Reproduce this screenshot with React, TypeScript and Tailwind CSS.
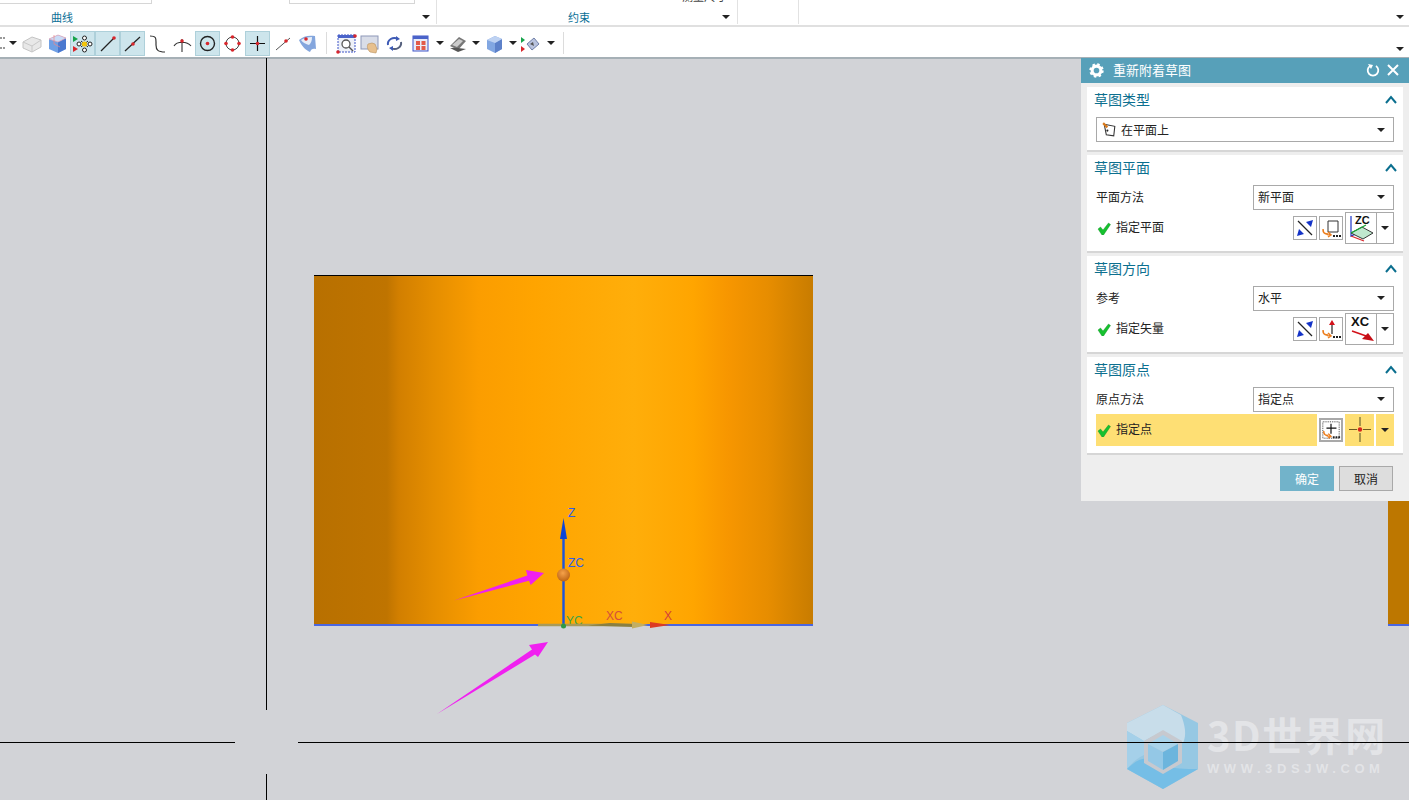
import React from "react";

const font = { fontFamily: '"Noto Sans CJK SC", "Liberation Sans", sans-serif' };

const Caret = ({ className = "" }: { className?: string }) => (
  <span className={`inline-block w-0 h-0 border-x-[4px] border-x-transparent border-t-[4px] border-t-[#222] ${className}`} />
);

// toolbar icons
const Dot = ({ cx, cy, r = 1.8 }: { cx: number; cy: number; r?: number }) => <circle cx={cx} cy={cy} r={r} fill="#d8262c" />;

const icons: Record<string, React.ReactNode> = {
  ghostBox: (
    <>
      <path d="M2 10l9-5 9 3v7l-9 5-9-4z" fill="#e8e8e8" stroke="#c4c4c4" />
      <path d="M2 10l9 4 9-6M11 14v6" fill="none" stroke="#c8c8c8" />
    </>
  ),
  cube: (
    <>
      <path d="M3 7l9-4 8 3v11l-8 4-9-4z" fill="#6f9fe4" />
      <path d="M12 10l8-4v11l-8 4z" fill="#4a78cf" />
      <path d="M3 7l9 3 8-4-8-3z" fill="#c9dcf7" stroke="#e6a3b3" strokeWidth="0.7" />
      <path d="M8 3v9l6 3" fill="none" stroke="#e88" strokeWidth="0.7" />
    </>
  ),
  snap: (
    <>
      <path d="M2 4l5 3-5 3z" fill="#16a34a" />
      <path d="M2 14l5 3-5 3z" fill="#d8262c" />
      <path d="M10 9l7 6M17 9l-7 6" stroke="#222" />
      <circle cx="13.500" cy="6" r="2" fill="#fff" stroke="#222" />
      <circle cx="13.500" cy="18" r="2" fill="#fff" stroke="#222" />
      <circle cx="8" cy="12" r="2" fill="#fff" stroke="#222" />
      <circle cx="19" cy="12" r="2" fill="#fff" stroke="#222" />
      <circle cx="13.500" cy="12" r="2.600" fill="#f4c60b" />
    </>
  ),
  lineEnd: (
    <>
      <path d="M5 19L18 6" stroke="#222" strokeWidth="1.2" />
      <Dot cx={18} cy={6} />
    </>
  ),
  lineMid: (
    <>
      <path d="M4 19L19 5" stroke="#222" strokeWidth="1.2" />
      <Dot cx={12} cy={12} />
    </>
  ),
  sCurve: <path d="M4 4c6 0 6 2 6 6v3c0 5 2 7 9 7" fill="none" stroke="#333" strokeWidth="1.2" />,
  arcCross: (
    <>
      <path d="M3 14c3-5 13-5 17 0M11 7v13" fill="none" stroke="#333" strokeWidth="1.1" />
      <Dot cx={11} cy={9} />
    </>
  ),
  circleCenter: (
    <>
      <circle cx="11.5" cy="11.5" r="7" fill="none" stroke="#222" strokeWidth="1.4" />
      <Dot cx={11.5} cy={11.5} />
    </>
  ),
  circleQuad: (
    <>
      <circle cx="11.5" cy="11.5" r="6.5" fill="none" stroke="#444" />
      <Dot cx={11.5} cy={5} />
      <Dot cx={11.5} cy={18} />
      <Dot cx={5} cy={11.5} />
      <Dot cx={18} cy={11.5} />
    </>
  ),
  cross: (
    <>
      <path d="M11.5 4v15M4 11.5h15" stroke="#111" strokeWidth="1.2" />
      <Dot cx={11.5} cy={11.5} />
    </>
  ),
  lineNear: (
    <>
      <path d="M5 18L19 6" stroke="#555" />
      <Dot cx={15} cy={9} />
    </>
  ),
  surface: (
    <>
      <path d="M3 8c4-4 10-5 16-4l1 13c-3-1-5 0-6 3-4-2-8-5-11-12z" fill="#84a6dd" />
      <path d="M5 8c3-2 7-3 11-3 0 4-1 6-3 8-3-1-6-2-8-5z" fill="#e8eef8" />
      <Dot cx={10} cy={7} />
    </>
  ),
  zoomFit: (
    <>
      <rect x="3" y="3" width="17" height="17" fill="#eef1f8" stroke="#3f55c8" strokeDasharray="2 1" />
      <rect x="3" y="3" width="17" height="3" fill="#4a63c9" />
      <circle cx="11" cy="12" r="4" fill="#fff" stroke="#555" strokeWidth="1.3" />
      <path d="M14 15l4 4" stroke="#555" strokeWidth="1.4" />
      <Dot cx={20} cy={4} />
      <Dot cx={3} cy={20} />
    </>
  ),
  pan: (
    <>
      <rect x="2" y="4" width="17" height="13" fill="#d9dde8" stroke="#8d97b8" />
      <path d="M11 20c-3-3-3-6-2-8l4-1 3 1 2 5-1 4z" fill="#e7c08e" stroke="#b9905a" strokeWidth="0.6" />
    </>
  ),
  rotate: (
    <>
      <path d="M5 13c-1-5 5-9 10-6" fill="none" stroke="#3d5ab5" strokeWidth="2" />
      <path d="M18 10c1 5-5 9-10 6" fill="none" stroke="#55607d" strokeWidth="2" />
      <path d="M13 4l4 3-4 2zM10 14l-4 2 4 3z" fill="#3d5ab5" />
    </>
  ),
  layout: (
    <>
      <rect x="3" y="4" width="15" height="15" fill="#e8ecf8" stroke="#3f55c8" />
      <rect x="3" y="4" width="15" height="3" fill="#4a63c9" />
      <rect x="6" y="9" width="4" height="4" fill="#e25a4a" />
      <rect x="11.500" y="9" width="4" height="4" fill="#e25a4a" />
      <rect x="6" y="14" width="4" height="4" fill="#e25a4a" />
      <rect x="11.500" y="14" width="4" height="4" fill="#e25a4a" />
    </>
  ),
  shaded: (
    <>
      <path d="M3 14l9-9 7 4-8 9z" fill="#777" />
      <path d="M5 13l7-6 4 2-6 6z" fill="#ccc" />
      <path d="M3 16l8 4 8-3-8-1z" fill="#555" />
    </>
  ),
  cubeBlue: (
    <>
      <path d="M4 8l8-4 7 3v10l-7 4-8-4z" fill="#82a7e2" />
      <path d="M12 11l7-4v10l-7 4z" fill="#5d81c9" />
      <path d="M4 8l8 3 7-4-7-3z" fill="#bed2f2" />
    </>
  ),
  display: (
    <>
      <path d="M3 5l4 3-4 3z" fill="#16a34a" />
      <path d="M3 14l4 3-4 3z" fill="#d8262c" />
      <path d="M9 12l7-6 5 6-7 6z" fill="#b9c3de" stroke="#6f7fa8" />
      <path d="M12 12l3-2 1 4z" fill="#555" />
    </>
  ),
};

const ToolIcon = ({ name, active = false }: { name: string; active?: boolean }) => (
  <div className={`w-[23px] h-[23px] shrink-0 flex items-center justify-center ${active ? "bg-[#cde5ec] outline outline-[#aed0da]" : ""}`}>
    <svg width="23" height="23" viewBox="0 0 23 23">{icons[name]}</svg>
  </div>
);

const Ribbon = () => (
  <div className="h-[27px] bg-white border-b-2 border-[#e0e0e0] flex relative text-[11px] text-[#0a6f96]" style={font}>
    <div className="w-[437px] border-r border-[#e2e2e2] h-[24px] relative flex justify-start">
      <div className="w-[152px] h-[4px] border-b border-r border-[#d6d6d6]" />
      <div className="w-[126px] h-[4px] border-b border-x border-[#d6d6d6] ml-[137px]" />
      <span className="absolute left-[51px] top-[9px] leading-[16px]">曲线</span>
      <Caret className="absolute left-[422px] top-[15px]" />
    </div>
    <div className="w-[301px] border-r border-[#e2e2e2] h-[24px] relative">
      <span className="absolute left-[131px] top-[9px] leading-[16px]">约束</span>
      <span className="absolute left-[245px] top-[-11px] leading-[14px] text-[#444]">测量尺寸</span>
      <Caret className="absolute left-[285px] top-[15px]" />
    </div>
    <div className="w-[61px] border-r border-[#e2e2e2] h-[24px]" />
    <Caret className="absolute left-[1396px] top-[15px]" />
  </div>
);

const Toolbar = () => (
  <div className="h-[32px] -mb-px pt-[2px] bg-white border-b-2 border-[#a6b0b6] flex items-center relative">
    <div className="w-[8px] h-[12px] border-y-2 border-dotted border-[#999] -ml-[3px] mr-[4px]" />
    <Caret className="mr-[4px]" />
    <div className="flex items-center gap-[2px]">
      <ToolIcon name="ghostBox" />
      <ToolIcon name="cube" />
      <ToolIcon name="snap" active />
      <ToolIcon name="lineEnd" active />
      <ToolIcon name="lineMid" active />
      <ToolIcon name="sCurve" />
      <ToolIcon name="arcCross" />
      <ToolIcon name="circleCenter" active />
      <ToolIcon name="circleQuad" />
      <ToolIcon name="cross" active />
      <ToolIcon name="lineNear" />
      <ToolIcon name="surface" />
    </div>
    <div className="w-px h-[22px] bg-[#dcdcdc] ml-[7px] mr-[8px]" />
    <div className="flex items-center gap-[1px]">
      <ToolIcon name="zoomFit" />
      <ToolIcon name="pan" />
      <ToolIcon name="rotate" />
      <div className="ml-[3px]"><ToolIcon name="layout" /></div>
      <Caret className="ml-[2px] mr-[2px]" />
      <ToolIcon name="shaded" />
      <Caret className="ml-[1px] mr-[2px]" />
      <ToolIcon name="cubeBlue" />
      <Caret className="ml-[2px]" />
      <ToolIcon name="display" />
      <Caret className="ml-[5px]" />
    </div>
    <div className="w-px h-[22px] bg-[#dcdcdc] ml-[8px]" />
    <Caret className="absolute left-[1396px] top-[20px]" />
  </div>
);

// dialog bits
const Section = ({ title, children }: { title: string; children: React.ReactNode }) => (
  <div className="bg-white border-b-2 border-[#d6d6d6] mb-[3px] pl-[7px] pr-[9px]">
    <div className="h-[26px] pb-[1px] flex items-center justify-between text-[14px] text-[#0b6f8f]">
      <span>{title}</span>
      <svg width="12" height="9" viewBox="0 0 12 9" className="-mr-[3px]"><path d="M1 8l5-6 5 6" fill="none" stroke="#0b6f8f" strokeWidth="2" /></svg>
    </div>
    {children}
  </div>
);

const Select = ({ children, className = "" }: { children: React.ReactNode; className?: string }) => (
  <div className={`h-[25px] border border-[#a9a9a9] bg-white flex items-center justify-between pl-[4px] pr-[8px] text-[12px] text-[#222] ${className}`}>
    <span className="flex items-center gap-[3px]">{children}</span>
    <Caret />
  </div>
);

const Check = () => (
  <svg width="14" height="13" viewBox="0 0 14 13"><path d="M1 7l2.500-2 2.500 3 5.500-7 2 1.500-7 10.500h-1.500z" fill="#16c12f" stroke="#0f8a24" strokeWidth="0.4" /></svg>
);

const SmallBtn = ({ children, thick = false }: { children: React.ReactNode; thick?: boolean }) => (
  <div className={`w-[24px] h-[24px] bg-white flex items-center justify-center ${thick ? "border-2 border-[#a9a9a9]" : "border border-[#a9a9a9]"}`}>
    <svg width="22" height="22" viewBox="0 0 22 22">{children}</svg>
  </div>
);

const Inference = () => (
  <>
    <path d="M4 4l14 14" stroke="#222" strokeWidth="1.2" />
    <path d="M3 19l2-7 5 5zM19 3l-7 2 5 5z" fill="#1433c8" />
  </>
);

const OrangeArrow = () => <path d="M3 12c0 5 3 6 8 6M8 15l3 3-3 2M3 13c0 3 2 4 5 4" fill="none" stroke="#ec7d1c" strokeWidth="1.500" />;

const Dots = () => <path d="M13 19h2M16 19h2M19 19h2" stroke="#222" strokeWidth="2" />;

const SplitBtn = ({ children, bare = false }: { children: React.ReactNode; bare?: boolean }) => (
  <div className={`w-[49px] h-[32px] flex ${bare ? "" : "border border-[#a9a9a9] bg-white"}`}>
    <div className={`w-[31px] h-full shrink-0 ${bare ? "border-r-2 border-white" : "border-r border-[#a9a9a9]"}`}>
      <svg width="31" height="30" viewBox="0 0 31 30">{children}</svg>
    </div>
    <div className="flex-1 flex items-center justify-center"><Caret className="border-x-[3px] border-t-[3px]" /></div>
  </div>
);

const Row = ({ label, last, children }: { label: string; last?: boolean; children: React.ReactNode }) => (
  <div className="h-[32px] flex items-center gap-[2px]">
    <div className={`flex-1 flex items-center h-full pl-[1px] gap-[5px] text-[12px] text-[#222] ${last ? "bg-[#fedf74]" : ""}`}>
      <Check />
      <span className="pb-[2px]">{label}</span>
    </div>
    {children}
  </div>
);

const SelectRow = ({ label, value }: { label: string; value: string }) => (
  <div className="h-[25px] flex items-center justify-between pl-[2px] text-[12px] text-[#222] mt-[4px]">
    <span className="pb-[2px]">{label}</span>
    <Select className="w-[141px] pb-[2px]">{value}</Select>
  </div>
);

const Dialog = () => (
  <div className="absolute left-[1081px] top-0 w-[328px] h-[443px] bg-[#eeeeee] flex flex-col" style={font}>
    <div className="h-[25px] shrink-0 bg-[#57a0b9] flex items-center pl-[8px] pr-[10px] pb-[1px] text-white text-[13px]">
      <svg width="15" height="15" viewBox="0 0 24 24" className="mr-[9px]">
        <circle cx="12" cy="12" r="7" fill="none" stroke="#fff" strokeWidth="5" />
        <circle cx="12" cy="12" r="10" fill="none" stroke="#fff" strokeWidth="3" strokeDasharray="4 3.850" />
      </svg>
      <span className="flex-1">重新附着草图</span>
      <svg width="14" height="14" viewBox="0 0 14 14" className="mr-[7px]"><path d="M4 3a5.300 5.300 0 1 0 6 0" fill="none" stroke="#fff" strokeWidth="1.800" /><path d="M2 1l5 1-2 4z" fill="#fff" /></svg>
      <svg width="12" height="12" viewBox="0 0 12 12"><path d="M1 1l10 10M11 1L1 11" stroke="#fff" strokeWidth="2" /></svg>
    </div>
    <div className="pl-[6px] pr-[6px] pt-[4px]">
      <Section title="草图类型">
        <div className="pb-[8px] pt-[4px] pl-[2px]">
          <Select>
            <svg width="17" height="17" viewBox="0 0 16 16">
              <path d="M3 3l10 2-1 9-7-1z" fill="#fff" stroke="#333" />
              <path d="M2 2l4 4" stroke="#d97a1c" strokeWidth="2" />
              <circle cx="6" cy="9" r="1" fill="#222" />
            </svg>
            在平面上
          </Select>
        </div>
      </Section>
      <Section title="草图平面">
        <SelectRow label="平面方法" value="新平面" />
        <div className="pl-[2px] pb-[7px] mt-[2px]">
          <Row label="指定平面">
            <SmallBtn><Inference /></SmallBtn>
            <SmallBtn>
              <path d="M8 4h10v11H8z" fill="#fff" stroke="#333" />
              <OrangeArrow />
              <Dots />
            </SmallBtn>
            <SplitBtn>
              <path d="M5 3v20l9-4" fill="none" stroke="#1c35c9" strokeWidth="1.200" />
              <path d="M5 23l13 5" stroke="#d8262c" strokeWidth="1.200" />
              <path d="M5 20l11-6 11 6-10 6z" fill="#bfe8cf" stroke="#222" strokeWidth="0.900" />
              <path d="M5 20l15-8" stroke="#17a534" strokeWidth="1.400" />
              <text x="9" y="11" fontSize="11" fontWeight="700" fill="#111" fontFamily="Liberation Sans">ZC</text>
            </SplitBtn>
          </Row>
        </div>
      </Section>
      <Section title="草图方向">
        <SelectRow label="参考" value="水平" />
        <div className="pl-[2px] pb-[7px] mt-[2px]">
          <Row label="指定矢量">
            <SmallBtn><Inference /></SmallBtn>
            <SmallBtn>
              <path d="M12 16V6" stroke="#222" strokeWidth="1.200" />
              <path d="M12 2l3 5h-6z" fill="#d3121a" />
              <OrangeArrow />
              <Dots />
            </SmallBtn>
            <SplitBtn>
              <text x="5" y="12" fontSize="13" fontWeight="700" fill="#111" fontFamily="Liberation Sans">XC</text>
              <path d="M6 17l17 6" stroke="#d3121a" strokeWidth="1.600" />
              <path d="M28 27l-12-2 6-6z" fill="#c60f16" />
            </SplitBtn>
          </Row>
        </div>
      </Section>
      <Section title="草图原点">
        <SelectRow label="原点方法" value="指定点" />
        <div className="pl-[2px] pb-[7px] mt-[2px]">
          <Row label="指定点" last>
            <SmallBtn thick>
              <rect x="2" y="2" width="18" height="18" fill="#fff" stroke="#333" strokeDasharray="1 1" />
              <path d="M11 4v11M6 9h11" stroke="#111" strokeWidth="1.300" />
              <OrangeArrow />
              <Dots />
            </SmallBtn>
            <div className="bg-[#fedf74]">
              <SplitBtn bare>
                <path d="M15 3v9M15 19v9" stroke="#8a7f40" strokeWidth="1.500" />
                <path d="M4 15.500h8M18 15.500h8" stroke="#6d5a20" strokeWidth="1.200" />
                <circle cx="15" cy="15.500" r="2.200" fill="#d8261c" />
              </SplitBtn>
            </div>
          </Row>
        </div>
      </Section>
      <div className="flex justify-end gap-[5px] pr-[10px] pt-[8px] text-[12px]">
        <div className="w-[54px] h-[25px] bg-[#72b3ca] text-white flex items-center justify-center">确定</div>
        <div className="w-[54px] h-[25px] bg-[#dddddd] border border-[#a9a9a9] text-[#222] flex items-center justify-center">取消</div>
      </div>
    </div>
  </div>
);

// crosshair arms, gap in the middle
const Crosshair = () => (
  <>
    <div className="absolute left-[266px] top-0 w-px h-[652px] bg-black" />
    <div className="absolute left-[266px] top-[716px] w-px h-[26px] bg-black" />
    <div className="absolute left-0 top-[684px] w-[235px] h-px bg-black" />
    <div className="absolute left-[298px] top-[684px] w-[1111px] h-px bg-black" />
  </>
);

const shade =
  "bg-[linear-gradient(90deg,#b87000_0%,#bf7400_14.600%,#d27f00_17%,#e58e00_24%,#fb9d00_33%,#ffa400_44%,#ffae0a_64%,#ffa500_76%,#f79600_83%,#e78d00_91%,#c87c00_100%)]";

const Triad = () => (
  <svg className="absolute left-0 top-0" width="1409" height="742" viewBox="0 58 1409 742" fontFamily="Liberation Sans" fontSize="12">
    <defs>
      <radialGradient id="ball" cx="0.45" cy="0.35" r="0.7">
        <stop offset="0" stopColor="#f6a24a" />
        <stop offset="1" stopColor="#b85f10" />
      </radialGradient>
    </defs>
    <path d="M563.500 625V535" stroke="#1c55dc" strokeWidth="2.400" />
    <path d="M563.500 518l-3.500 21h7z" fill="#0d45d8" />
    <circle cx="563.500" cy="575" r="6.500" fill="url(#ball)" />
    <text x="568" y="517" fill="#2f5fe8">Z</text>
    <text x="568" y="567" fill="#2f5fe8">ZC</text>
    <text x="566" y="625" fill="#3aa34a">YC</text>
    <text x="606" y="620" fill="#d4503a">XC</text>
    <text x="664" y="620" fill="#d4403a">X</text>
    <path d="M538 625H634" stroke="#a89a58" strokeWidth="2.400" />
    <path d="M588 625.500l22-2.500 24 1v3z" fill="#8a7f40" />
    <path d="M632 621.500l16 3.500-16 3.500z" fill="#c2ae62" />
    <path d="M650 622l20 3-20 3z" fill="#dc3b24" />
    <circle cx="563.500" cy="626" r="2.500" fill="#2f9a45" />
    <path d="M454 600.500L527.300 575.500 526 570l18 3-13.300 12-1.700-4.300z" fill="#f020f0" />
    <path d="M437 714L532 649.500 529 645l19-3-10 15-3-2.500z" fill="#f020f0" />
  </svg>
);

const Watermark = () => (
  <div className="absolute left-[1126px] top-[647px] flex items-start opacity-90">
    <svg width="74" height="84" viewBox="0 0 74 84">
      <path d="M37 0L72 18v46L37 84 1 64V18z" fill="#7fc4e8" opacity="0.8" />
      <path d="M37 0L55 10c4 10 6 20 2 28L37 26 18 36 1 26V18z" fill="#d4e5ef" opacity="0.8" />
      <path d="M1 26l17 10v14c-8 4-12 8-17 14z" fill="#a5d2ec" opacity="0.8" />
      <path d="M1 64c10-10 22-16 36-4 10 4 22 4 35 4L37 84z" fill="#6cbce8" />
      <path d="M18 36L37 25l19 11v22L37 69 18 58z" fill="#c6c9cf" />
      <path d="M22 39l15-9 15 9-15 8z" fill="#a5d2ec" />
      <path d="M22 39l15 8v18l-15-9z" fill="#8ec7e8" />
      <path d="M52 39L37 47v18l15-9z" fill="#62b2de" />
    </svg>
    <div className="ml-[7px] mt-[6px] text-[#e5e6e9]">
      <div className="text-[40px] leading-[46px] font-bold tracking-[1.500px] whitespace-nowrap" style={font}>3D世界网</div>
      <div className="text-[13px] leading-[14px] font-bold tracking-[4.600px] mt-[5px] whitespace-nowrap" style={{ fontFamily: '"Liberation Sans", sans-serif' }}>WWW.3DSJW.COM</div>
    </div>
  </div>
);

const App = () => {
  return (
    <div className="w-[1409px] h-[800px] overflow-hidden bg-[#d2d3d7] flex flex-col">
      <Ribbon />
      <Toolbar />
      <div className="relative flex-1">
        <Watermark />
        <Crosshair />
        <div className={`absolute left-[314px] top-[217px] w-[499px] h-[351px] border-t border-black border-b-2 border-b-[#4a66e0] ${shade}`} />
        <div className="absolute left-[1388px] top-[440px] w-[21px] h-[128px] bg-[#bd7700] border-b-2 border-b-[#4a66e0]" />
        <Triad />
        <Dialog />
      </div>
    </div>
  );
};

export default App;
